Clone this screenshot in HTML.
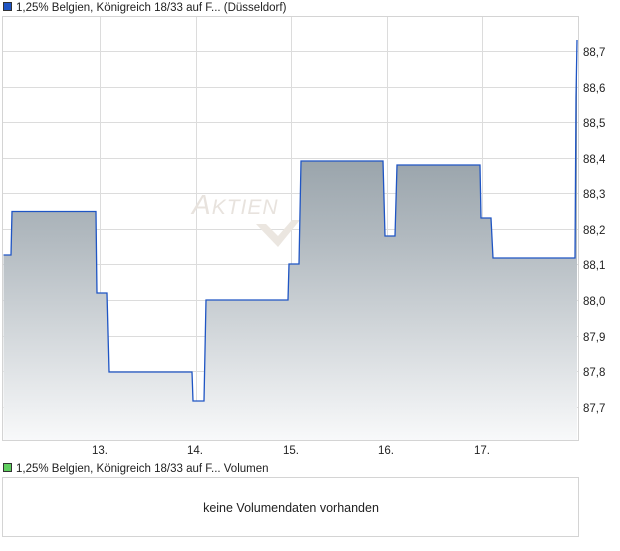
<!DOCTYPE html>
<html><head><meta charset="utf-8"><style>
body{margin:0;background:#fff;width:620px;height:546px;overflow:hidden;font-family:"Liberation Sans",sans-serif;}
</style></head><body>
<svg width="620" height="546" xmlns="http://www.w3.org/2000/svg" font-family="Liberation Sans, sans-serif" font-size="12">
<defs><linearGradient id="g" x1="0" y1="0" x2="0" y2="1"><stop offset="0" stop-color="#76848d"/><stop offset="0.5" stop-color="#b2bac0"/><stop offset="1" stop-color="#f8f9fa"/></linearGradient></defs>
<rect x="3.5" y="2.5" width="8" height="8" fill="#1f55c4" stroke="#333" stroke-width="1"/>
<text x="16" y="11" fill="#222" font-size="11.5">1,25% Belgien, Königreich 18/33 auf F... (Düsseldorf)</text>
<g stroke="#dcdcdc" stroke-width="1">
<line x1="3" y1="51.5" x2="578" y2="51.5"/><line x1="3" y1="87.5" x2="578" y2="87.5"/><line x1="3" y1="122.5" x2="578" y2="122.5"/><line x1="3" y1="158.5" x2="578" y2="158.5"/><line x1="3" y1="193.5" x2="578" y2="193.5"/><line x1="3" y1="229.5" x2="578" y2="229.5"/><line x1="3" y1="264.5" x2="578" y2="264.5"/><line x1="3" y1="300.5" x2="578" y2="300.5"/><line x1="3" y1="336.5" x2="578" y2="336.5"/><line x1="3" y1="371.5" x2="578" y2="371.5"/><line x1="3" y1="407.5" x2="578" y2="407.5"/>
<line x1="100.5" y1="17" x2="100.5" y2="440"/><line x1="196.5" y1="17" x2="196.5" y2="440"/><line x1="291.5" y1="17" x2="291.5" y2="440"/><line x1="387.5" y1="17" x2="387.5" y2="440"/><line x1="482.5" y1="17" x2="482.5" y2="440"/>
</g>
<text x="192" y="214" fill="#e8e3de" font-size="28" font-style="italic" letter-spacing="1">A<tspan font-size="21">KTIEN</tspan></text>
<path d="M256 224 L278 247 L300 220 L292 220 L278 236 L266 224Z" fill="#ebe6e0"/>
<path d="M3.5 255 L11 255 L12 211.5 L96 211.5 L97 293 L107 293 L109 372 L192 372 L193 401 L204 401 L206 300 L288 300 L289 264 L299 264 L301 161 L383 161 L385 236 L395 236 L397 165 L480 165 L481 218 L491 218 L493 258 L575 258 L576 97 L577 40 L577 440 L3.5 440Z" fill="url(#g)"/>
<path d="M3.5 255 L11 255 L12 211.5 L96 211.5 L97 293 L107 293 L109 372 L192 372 L193 401 L204 401 L206 300 L288 300 L289 264 L299 264 L301 161 L383 161 L385 236 L395 236 L397 165 L480 165 L481 218 L491 218 L493 258 L575 258 L576 97 L577 40" fill="none" stroke="#1f55c4" stroke-width="1.3"/>
<rect x="2.5" y="16.5" width="576" height="424" fill="none" stroke="#d4d4d4"/>
<g fill="#222" font-size="11.5">
<text x="583" y="56">88,7</text><text x="583" y="92">88,6</text><text x="583" y="127">88,5</text><text x="583" y="163">88,4</text><text x="583" y="198">88,3</text><text x="583" y="234">88,2</text><text x="583" y="269">88,1</text><text x="583" y="305">88,0</text><text x="583" y="341">87,9</text><text x="583" y="376">87,8</text><text x="583" y="412">87,7</text>
<text x="92" y="454">13.</text><text x="187" y="454">14.</text><text x="283" y="454">15.</text><text x="378" y="454">16.</text><text x="474" y="454">17.</text>
</g>
<rect x="3.5" y="463.5" width="8" height="8" fill="#5fcf5f" stroke="#333"/>
<text x="16" y="472" fill="#222" font-size="11.5">1,25% Belgien, Königreich 18/33 auf F... Volumen</text>
<rect x="2.5" y="477.5" width="576" height="59" fill="none" stroke="#d4d4d4"/>
<text x="291" y="512" fill="#222" font-size="12.5" text-anchor="middle">keine Volumendaten vorhanden</text>
</svg>
</body></html>
